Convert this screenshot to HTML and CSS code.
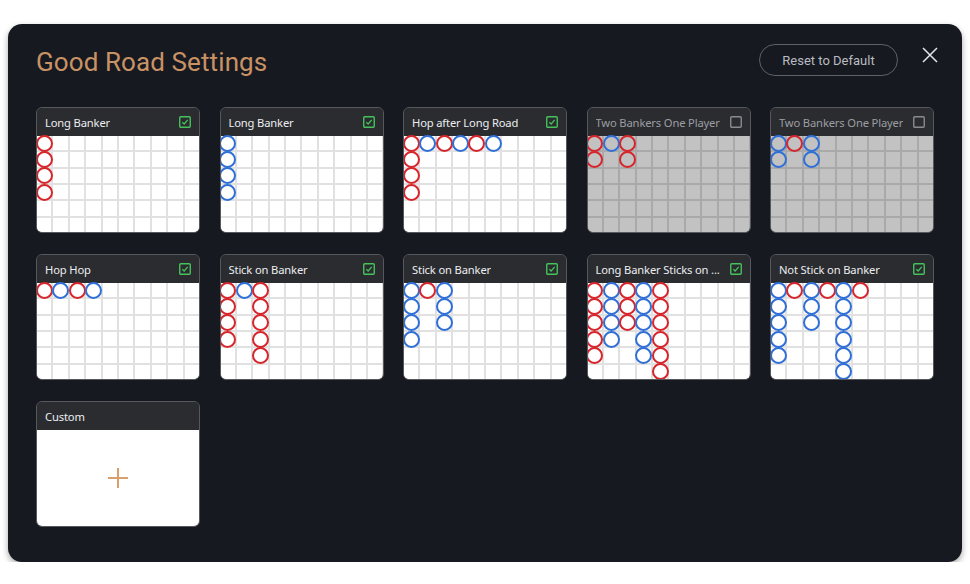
FILE: index.html
```html
<!DOCTYPE html>
<html>
<head>
<meta charset="utf-8">
<link rel="stylesheet" href="styles.css">
</head>
<body>
<div class="panel">
  <div class="header">
    <h1 class="title">Good Road Settings</h1>
    <div class="actions">
      <button class="reset">Reset to Default</button>
      <button class="close" aria-label="Close">
        <svg width="16" height="16" viewBox="0 0 16 16"><path d="M1 1L15 15M15 1L1 15" stroke="#e4e6ea" stroke-width="1.5" fill="none"/></svg>
      </button>
    </div>
  </div>
  <div class="cards">
    <div class="card">
      <div class="card-head"><span>Long Banker</span><svg class="chk on" viewBox="0 0 12 12"><rect x="0.75" y="0.75" width="10.5" height="10.5" rx="1"/><path d="M3.3 6.2L5.2 8L8.7 3.9"/></svg></div>
      <div class="road">
        <i class="r"></i><i></i><i></i><i></i><i></i><i></i><i></i><i></i><i></i><i></i>
        <i class="r"></i><i></i><i></i><i></i><i></i><i></i><i></i><i></i><i></i><i></i>
        <i class="r"></i><i></i><i></i><i></i><i></i><i></i><i></i><i></i><i></i><i></i>
        <i class="r"></i><i></i><i></i><i></i><i></i><i></i><i></i><i></i><i></i><i></i>
        <i></i><i></i><i></i><i></i><i></i><i></i><i></i><i></i><i></i><i></i>
        <i></i><i></i><i></i><i></i><i></i><i></i><i></i><i></i><i></i><i></i>
      </div>
    </div>
    <div class="card">
      <div class="card-head"><span>Long Banker</span><svg class="chk on" viewBox="0 0 12 12"><rect x="0.75" y="0.75" width="10.5" height="10.5" rx="1"/><path d="M3.3 6.2L5.2 8L8.7 3.9"/></svg></div>
      <div class="road">
        <i class="b"></i><i></i><i></i><i></i><i></i><i></i><i></i><i></i><i></i><i></i>
        <i class="b"></i><i></i><i></i><i></i><i></i><i></i><i></i><i></i><i></i><i></i>
        <i class="b"></i><i></i><i></i><i></i><i></i><i></i><i></i><i></i><i></i><i></i>
        <i class="b"></i><i></i><i></i><i></i><i></i><i></i><i></i><i></i><i></i><i></i>
        <i></i><i></i><i></i><i></i><i></i><i></i><i></i><i></i><i></i><i></i>
        <i></i><i></i><i></i><i></i><i></i><i></i><i></i><i></i><i></i><i></i>
      </div>
    </div>
    <div class="card">
      <div class="card-head"><span>Hop after Long Road</span><svg class="chk on" viewBox="0 0 12 12"><rect x="0.75" y="0.75" width="10.5" height="10.5" rx="1"/><path d="M3.3 6.2L5.2 8L8.7 3.9"/></svg></div>
      <div class="road">
        <i class="r"></i><i class="b"></i><i class="r"></i><i class="b"></i><i class="r"></i><i class="b"></i><i></i><i></i><i></i><i></i>
        <i class="r"></i><i></i><i></i><i></i><i></i><i></i><i></i><i></i><i></i><i></i>
        <i class="r"></i><i></i><i></i><i></i><i></i><i></i><i></i><i></i><i></i><i></i>
        <i class="r"></i><i></i><i></i><i></i><i></i><i></i><i></i><i></i><i></i><i></i>
        <i></i><i></i><i></i><i></i><i></i><i></i><i></i><i></i><i></i><i></i>
        <i></i><i></i><i></i><i></i><i></i><i></i><i></i><i></i><i></i><i></i>
      </div>
    </div>
    <div class="card off">
      <div class="card-head"><span>Two Bankers One Player</span><svg class="chk" viewBox="0 0 12 12"><rect x="0.75" y="0.75" width="10.5" height="10.5" rx="1"/></svg></div>
      <div class="road">
        <i class="r"></i><i class="b"></i><i class="r"></i><i></i><i></i><i></i><i></i><i></i><i></i><i></i>
        <i class="r"></i><i></i><i class="r"></i><i></i><i></i><i></i><i></i><i></i><i></i><i></i>
        <i></i><i></i><i></i><i></i><i></i><i></i><i></i><i></i><i></i><i></i>
        <i></i><i></i><i></i><i></i><i></i><i></i><i></i><i></i><i></i><i></i>
        <i></i><i></i><i></i><i></i><i></i><i></i><i></i><i></i><i></i><i></i>
        <i></i><i></i><i></i><i></i><i></i><i></i><i></i><i></i><i></i><i></i>
      </div>
    </div>
    <div class="card off">
      <div class="card-head"><span>Two Bankers One Player</span><svg class="chk" viewBox="0 0 12 12"><rect x="0.75" y="0.75" width="10.5" height="10.5" rx="1"/></svg></div>
      <div class="road">
        <i class="b"></i><i class="r"></i><i class="b"></i><i></i><i></i><i></i><i></i><i></i><i></i><i></i>
        <i class="b"></i><i></i><i class="b"></i><i></i><i></i><i></i><i></i><i></i><i></i><i></i>
        <i></i><i></i><i></i><i></i><i></i><i></i><i></i><i></i><i></i><i></i>
        <i></i><i></i><i></i><i></i><i></i><i></i><i></i><i></i><i></i><i></i>
        <i></i><i></i><i></i><i></i><i></i><i></i><i></i><i></i><i></i><i></i>
        <i></i><i></i><i></i><i></i><i></i><i></i><i></i><i></i><i></i><i></i>
      </div>
    </div>

    <div class="card">
      <div class="card-head"><span>Hop Hop</span><svg class="chk on" viewBox="0 0 12 12"><rect x="0.75" y="0.75" width="10.5" height="10.5" rx="1"/><path d="M3.3 6.2L5.2 8L8.7 3.9"/></svg></div>
      <div class="road">
        <i class="r"></i><i class="b"></i><i class="r"></i><i class="b"></i><i></i><i></i><i></i><i></i><i></i><i></i>
        <i></i><i></i><i></i><i></i><i></i><i></i><i></i><i></i><i></i><i></i>
        <i></i><i></i><i></i><i></i><i></i><i></i><i></i><i></i><i></i><i></i>
        <i></i><i></i><i></i><i></i><i></i><i></i><i></i><i></i><i></i><i></i>
        <i></i><i></i><i></i><i></i><i></i><i></i><i></i><i></i><i></i><i></i>
        <i></i><i></i><i></i><i></i><i></i><i></i><i></i><i></i><i></i><i></i>
      </div>
    </div>
    <div class="card">
      <div class="card-head"><span>Stick on Banker</span><svg class="chk on" viewBox="0 0 12 12"><rect x="0.75" y="0.75" width="10.5" height="10.5" rx="1"/><path d="M3.3 6.2L5.2 8L8.7 3.9"/></svg></div>
      <div class="road">
        <i class="r"></i><i class="b"></i><i class="r"></i><i></i><i></i><i></i><i></i><i></i><i></i><i></i>
        <i class="r"></i><i></i><i class="r"></i><i></i><i></i><i></i><i></i><i></i><i></i><i></i>
        <i class="r"></i><i></i><i class="r"></i><i></i><i></i><i></i><i></i><i></i><i></i><i></i>
        <i class="r"></i><i></i><i class="r"></i><i></i><i></i><i></i><i></i><i></i><i></i><i></i>
        <i></i><i></i><i class="r"></i><i></i><i></i><i></i><i></i><i></i><i></i><i></i>
        <i></i><i></i><i></i><i></i><i></i><i></i><i></i><i></i><i></i><i></i>
      </div>
    </div>
    <div class="card">
      <div class="card-head"><span>Stick on Banker</span><svg class="chk on" viewBox="0 0 12 12"><rect x="0.75" y="0.75" width="10.5" height="10.5" rx="1"/><path d="M3.3 6.2L5.2 8L8.7 3.9"/></svg></div>
      <div class="road">
        <i class="b"></i><i class="r"></i><i class="b"></i><i></i><i></i><i></i><i></i><i></i><i></i><i></i>
        <i class="b"></i><i></i><i class="b"></i><i></i><i></i><i></i><i></i><i></i><i></i><i></i>
        <i class="b"></i><i></i><i class="b"></i><i></i><i></i><i></i><i></i><i></i><i></i><i></i>
        <i class="b"></i><i></i><i></i><i></i><i></i><i></i><i></i><i></i><i></i><i></i>
        <i></i><i></i><i></i><i></i><i></i><i></i><i></i><i></i><i></i><i></i>
        <i></i><i></i><i></i><i></i><i></i><i></i><i></i><i></i><i></i><i></i>
      </div>
    </div>
    <div class="card">
      <div class="card-head"><span>Long Banker Sticks on ...</span><svg class="chk on" viewBox="0 0 12 12"><rect x="0.75" y="0.75" width="10.5" height="10.5" rx="1"/><path d="M3.3 6.2L5.2 8L8.7 3.9"/></svg></div>
      <div class="road">
        <i class="r"></i><i class="b"></i><i class="r"></i><i class="b"></i><i class="r"></i><i></i><i></i><i></i><i></i><i></i>
        <i class="r"></i><i class="b"></i><i class="r"></i><i class="b"></i><i class="r"></i><i></i><i></i><i></i><i></i><i></i>
        <i class="r"></i><i class="b"></i><i class="r"></i><i class="b"></i><i class="r"></i><i></i><i></i><i></i><i></i><i></i>
        <i class="r"></i><i class="b"></i><i></i><i class="b"></i><i class="r"></i><i></i><i></i><i></i><i></i><i></i>
        <i class="r"></i><i></i><i></i><i class="b"></i><i class="r"></i><i></i><i></i><i></i><i></i><i></i>
        <i></i><i></i><i></i><i></i><i class="r"></i><i></i><i></i><i></i><i></i><i></i>
      </div>
    </div>
    <div class="card">
      <div class="card-head"><span>Not Stick on Banker</span><svg class="chk on" viewBox="0 0 12 12"><rect x="0.75" y="0.75" width="10.5" height="10.5" rx="1"/><path d="M3.3 6.2L5.2 8L8.7 3.9"/></svg></div>
      <div class="road">
        <i class="b"></i><i class="r"></i><i class="b"></i><i class="r"></i><i class="b"></i><i class="r"></i><i></i><i></i><i></i><i></i>
        <i class="b"></i><i></i><i class="b"></i><i></i><i class="b"></i><i></i><i></i><i></i><i></i><i></i>
        <i class="b"></i><i></i><i class="b"></i><i></i><i class="b"></i><i></i><i></i><i></i><i></i><i></i>
        <i class="b"></i><i></i><i></i><i></i><i class="b"></i><i></i><i></i><i></i><i></i><i></i>
        <i class="b"></i><i></i><i></i><i></i><i class="b"></i><i></i><i></i><i></i><i></i><i></i>
        <i></i><i></i><i></i><i></i><i class="b"></i><i></i><i></i><i></i><i></i><i></i>
      </div>
    </div>

    <div class="card">
      <div class="card-head"><span>Custom</span></div>
      <div class="custom-body">
        <svg width="22" height="22" viewBox="0 0 22 22"><path d="M11 1V21M1 11H21" stroke="#d9a06c" stroke-width="2" fill="none"/></svg>
      </div>
    </div>
  </div>
</div>
</body>
</html>
```

FILE: styles.css
```css
* { box-sizing: border-box; }

html, body {
  margin: 0;
  padding: 0;
  background: #ffffff;
}

.panel {
  margin: 24px 0 0 8px;
  width: 954px;
  height: 538px;
  background: #161920;
  border-radius: 14px;
  box-shadow: 0 3px 6px rgba(0, 0, 0, 0.35);
  padding: 0 24px 0 28px;
}

.header {
  display: flex;
  justify-content: space-between;
  align-items: flex-start;
  height: 83px;
}

.title {
  margin: 22px 0 0 0;
  font-family: "Roboto", "Liberation Sans", sans-serif;
  font-weight: 400;
  font-size: 26px;
  line-height: 32px;
  color: #c99265;
  letter-spacing: 0.1px;
}

.actions {
  display: flex;
  align-items: flex-start;
  gap: 24px;
}

.reset {
  margin-top: 20px;
  height: 32px;
  width: 139px;
  border: 1px solid #5d6168;
  border-radius: 16px;
  background: transparent;
  color: #b9bcc1;
  font-family: "Roboto", "Liberation Sans", sans-serif;
  font-size: 13px;
  padding: 0;
  cursor: pointer;
}

.close {
  margin-top: 23px;
  width: 16px;
  height: 16px;
  padding: 0;
  border: 0;
  background: transparent;
  display: flex;
  cursor: pointer;
}

.cards {
  display: grid;
  grid-template-columns: repeat(5, 164px);
  grid-auto-rows: 126px;
  column-gap: 19.5px;
  row-gap: 21px;
}

.card {
  display: flex;
  flex-direction: column;
  border: 1px solid #55585d;
  border-radius: 6px;
  overflow: hidden;
  background: #2b2c30;
}

.card-head {
  height: 28px;
  flex: none;
  display: flex;
  align-items: center;
  justify-content: space-between;
  gap: 3px;
  padding: 1px 8px 0 8px;
  background: #2b2c30;
  font-family: "Noto Sans", "Open Sans", sans-serif;
  font-size: 11.2px;
  letter-spacing: -0.15px;
  color: #eceef0;
  white-space: nowrap;
}

.card-head span {
  overflow: hidden;
  min-width: 0;
}

.chk {
  width: 12px;
  height: 12px;
  flex: none;
  margin-top: -2px;
}
.chk rect {
  fill: none;
  stroke: #8a8b8e;
  stroke-width: 1.4;
}
.chk path {
  fill: none;
  stroke: #45c25c;
  stroke-width: 1.3;
}
.chk.on rect { stroke: #45c25c; }

.off .card-head span { color: #9c9ea2; }

.road {
  height: 96px;
  flex: none;
  display: grid;
  grid-template-columns: repeat(10, minmax(0, 1fr));
  grid-template-rows: repeat(6, minmax(0, 1fr));
  gap: 2px;
  background: #e1e1e1;
}

.road i {
  background: #ffffff;
  display: flex;
  align-items: center;
  justify-content: center;
  overflow: visible;
  min-height: 0;
}

.off .road { background: #a9a9a9; }
.off .road i { background: #c2c2c2; }

.road i.r::after,
.road i.b::after {
  content: "";
  width: 13px;
  height: 13px;
  border-radius: 50%;
  border: 2px solid #d6262c;
  flex: none;
}
.road i.b::after { border-color: #2f6fd6; }

.custom-body {
  flex: 1;
  background: #ffffff;
  display: flex;
  align-items: center;
  justify-content: center;
}
```
